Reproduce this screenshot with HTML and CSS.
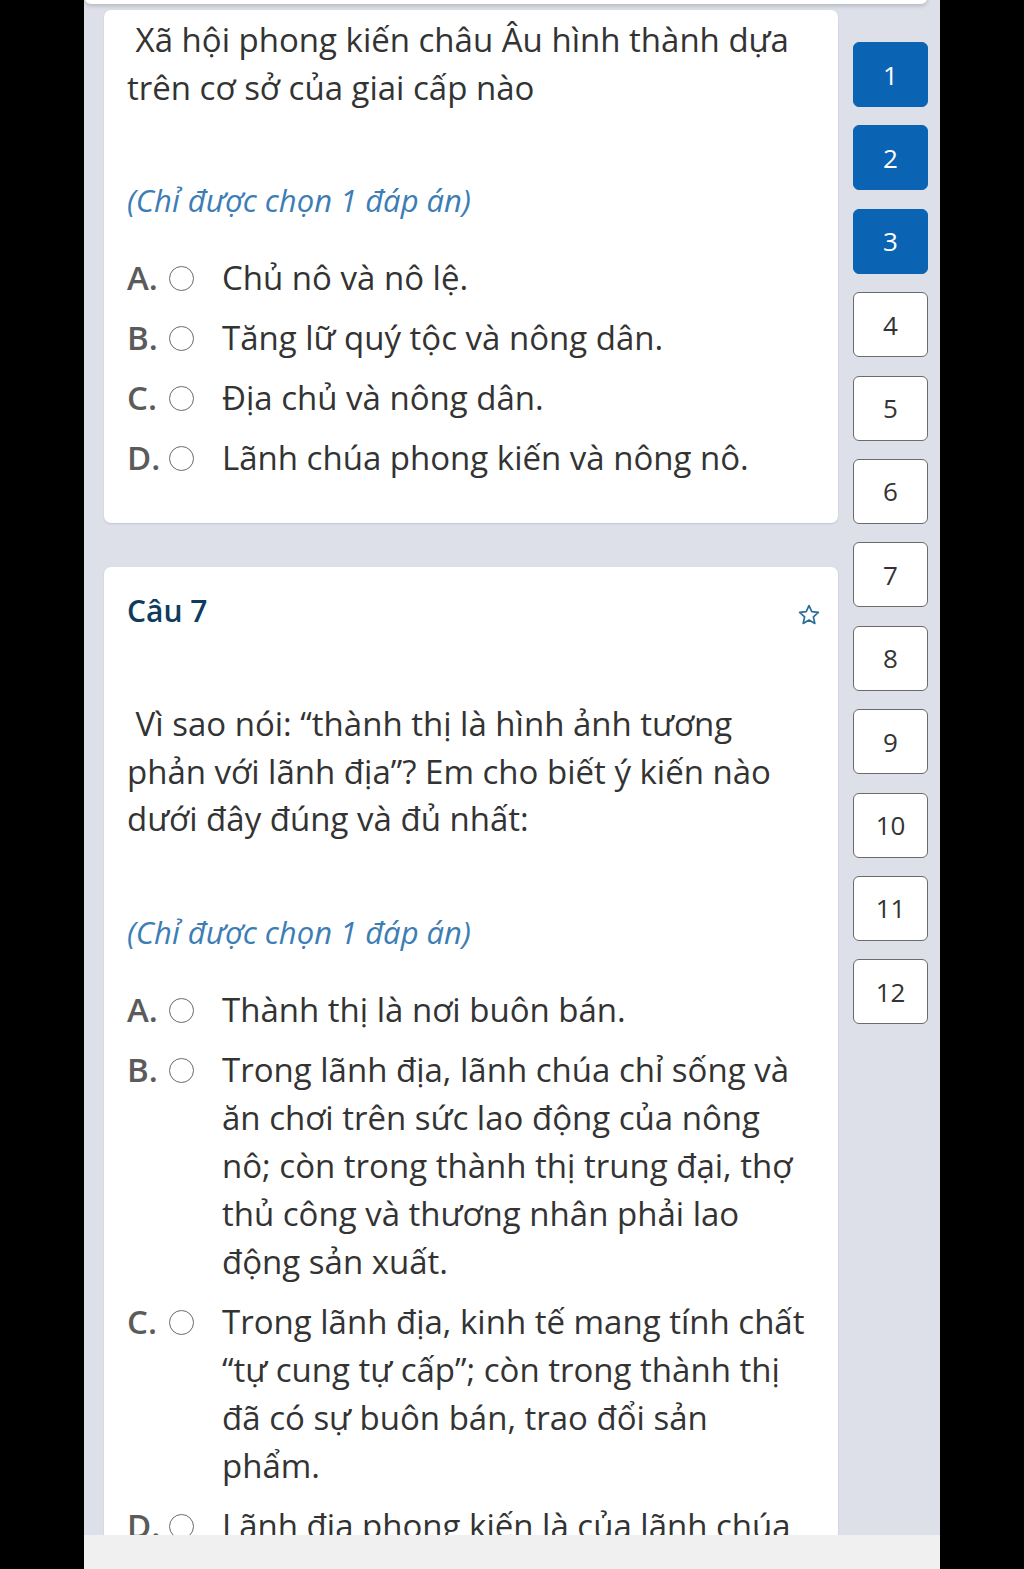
FILE: index.html
```html
<!DOCTYPE html>
<html lang="vi">
<head>
    <meta charset="UTF-8">
    <meta name="viewport" content="width=device-width, initial-scale=1.0">
    <title>Bài kiểm tra Lịch sử</title>
    <link rel="stylesheet" href="styles.css">
</head>
<body>
    <div class="screen">
        <div class="topbar"></div>

        <div class="layout">
            <div class="questions">
                <div class="card card-first">
                    <div class="q-text">&nbsp;Xã hội phong kiến châu Âu hình thành dựa trên cơ sở của giai cấp nào</div>
                    <div class="hint">(Chỉ được chọn 1 đáp án)</div>
                    <div class="options">
                        <div class="option"><span class="opt-label">A.</span><span class="radio"></span><span class="opt-text">Chủ nô và nô lệ.</span></div>
                        <div class="option"><span class="opt-label">B.</span><span class="radio"></span><span class="opt-text">Tăng lữ quý tộc và nông dân.</span></div>
                        <div class="option"><span class="opt-label">C.</span><span class="radio"></span><span class="opt-text">Địa chủ và nông dân.</span></div>
                        <div class="option"><span class="opt-label">D.</span><span class="radio"></span><span class="opt-text">Lãnh chúa phong kiến và nông nô.</span></div>
                    </div>
                </div>

                <div class="card">
                    <div class="card-head">
                        <h2 class="q-title">Câu 7</h2>
                        <svg class="star" width="24" height="24" viewBox="0 0 24 24"><path d="M12 2.6l2.8 6.1 6.6.7-5 4.5 1.4 6.5L12 17.1l-5.8 3.3 1.4-6.5-5-4.5 6.6-.7z" fill="none" stroke="#2b6d98" stroke-width="1.7" stroke-linejoin="round"/></svg>
                    </div>
                    <div class="q-text">&nbsp;Vì sao nói: “thành thị là hình ảnh tương phản với lãnh địa”? Em cho biết ý kiến nào dưới đây đúng và đủ nhất:</div>
                    <div class="hint">(Chỉ được chọn 1 đáp án)</div>
                    <div class="options">
                        <div class="option"><span class="opt-label">A.</span><span class="radio"></span><span class="opt-text">Thành thị là nơi buôn bán.</span></div>
                        <div class="option"><span class="opt-label">B.</span><span class="radio"></span><span class="opt-text">Trong lãnh địa, lãnh chúa chỉ sống và ăn chơi trên sức lao động của nông nô; còn trong thành thị trung đại, thợ thủ công và thương nhân phải lao động sản xuất.</span></div>
                        <div class="option"><span class="opt-label">C.</span><span class="radio"></span><span class="opt-text">Trong lãnh địa, kinh tế mang tính chất “tự cung tự cấp”; còn trong thành thị đã có sự buôn bán, trao đổi sản phẩm.</span></div>
                        <div class="option"><span class="opt-label">D.</span><span class="radio"></span><span class="opt-text">Lãnh địa phong kiến là của lãnh chúa phong kiến, thành thị là của thị dân.</span></div>
                    </div>
                </div>
            </div>

            <div class="nav">
                <div class="nav-btn done">1</div>
                <div class="nav-btn done">2</div>
                <div class="nav-btn done">3</div>
                <div class="nav-btn">4</div>
                <div class="nav-btn">5</div>
                <div class="nav-btn">6</div>
                <div class="nav-btn">7</div>
                <div class="nav-btn">8</div>
                <div class="nav-btn">9</div>
                <div class="nav-btn">10</div>
                <div class="nav-btn">11</div>
                <div class="nav-btn">12</div>
            </div>
        </div>

        <div class="bottombar"></div>
    </div>
</body>
</html>
```

FILE: styles.css
```css
body { margin: 0; background: #000; font-family: "Open Sans", "Noto Sans", sans-serif; color: #333; }
.screen { position: relative; width: 856px; height: 1569px; margin-left: 84px; background: #dde0e8; overflow: hidden; }
.topbar { position: absolute; top: -6px; left: 1px; width: 842px; height: 10px; background: #fff; border-radius: 0 0 6px 6px; box-shadow: 0 2px 4px rgba(0, 0, 0, 0.18); z-index: 2; }
.bottombar { position: absolute; left: 0; right: 0; bottom: 0; height: 34px; background: #f0f0f0; z-index: 2; }

.layout { display: flex; align-items: flex-start; }
.questions { width: 734px; margin-left: 20px; }
.card { background: #fff; border-radius: 7px; box-shadow: 0 1px 2px rgba(0, 0, 0, 0.12); padding: 20px 23px 41px; margin-bottom: 44px; }
.card-first { padding-top: 6px; margin-top: 10px; }

.card-head { display: flex; justify-content: space-between; align-items: center; margin-bottom: 66px; margin-right: -6px; }
.q-title { margin: 0; font-size: 30px; line-height: 47px; font-weight: 600; color: #0e3c60; }
.star { margin-top: 8px; }

.q-text { font-size: 33px; line-height: 47.5px; color: #333; padding-right: 15px; }
.hint { font-size: 31px; line-height: 48px; font-style: italic; color: #3c7db5; margin-top: 65px; }

.options { margin-top: 30px; display: flex; flex-direction: column; gap: 12px; }
.option { display: flex; align-items: flex-start; font-size: 33px; line-height: 48px; }
.opt-label { width: 42px; flex-shrink: 0; font-weight: 600; color: #5b5b5b; }
.radio { box-sizing: border-box; width: 25px; height: 25px; flex-shrink: 0; border: 1.6px solid #6a6a6a; border-radius: 50%; margin: 12px 28px 0 0; }
.opt-text { max-width: 584px; color: #333; }

.nav { width: 75px; margin-left: 15px; margin-top: 42px; display: flex; flex-direction: column; gap: 18.4px; }
.nav-btn { box-sizing: border-box; height: 65px; border: 1.5px solid #6b6b6b; border-radius: 6px; background: #fff; display: flex; align-items: center; justify-content: center; font-size: 26px; color: #333; }
.nav-btn.done { background: #0b63b3; border-color: #0b63b3; color: #fff; }
```
